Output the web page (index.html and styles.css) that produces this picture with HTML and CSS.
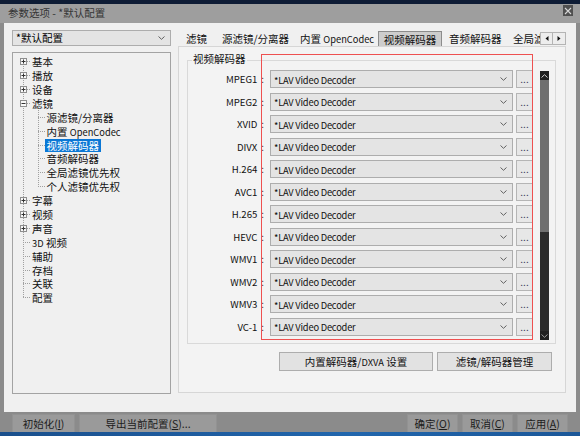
FILE: index.html
```html
<!DOCTYPE html>
<html lang="zh-CN">
<head>
<meta charset="utf-8">
<title>参数选项</title>
<link rel="stylesheet" href="styles.css">
</head>
<body>
<div class="screen">
  <div class="topstrip"></div>
  <div class="window">
    <div class="titlebar">
      <span class="title">参数选项 - *默认配置</span>
      <span class="close"><svg width="8" height="8" viewBox="0 0 8 8"><path d="M1 1L7 7M7 1L1 7" stroke="#d8d8d8" stroke-width="1.1"/></svg></span>
    </div>
    <div class="client">
      <div class="leftcol">
        <div class="combo profile">
          <span>*默认配置</span>
          <svg class="chev" width="7" height="4" viewBox="0 0 7 4"><path d="M0.5 0.5L3.5 3.3L6.5 0.5" fill="none" stroke="#606060"/></svg>
        </div>
        <div class="tree">
          <div class="level0">
            <div class="node"><svg class="exp" width="7" height="7" viewBox="0 0 7 7"><rect x="0.5" y="0.5" width="6" height="6" fill="#f7f7f7" stroke="#8e8e8e"/><path d="M1.5 3.5h4M3.5 1.5v4" stroke="#333"/></svg><span class="twig t0"></span><span class="lbl">基本</span></div>
            <div class="node"><svg class="exp" width="7" height="7" viewBox="0 0 7 7"><rect x="0.5" y="0.5" width="6" height="6" fill="#f7f7f7" stroke="#8e8e8e"/><path d="M1.5 3.5h4M3.5 1.5v4" stroke="#333"/></svg><span class="twig t0"></span><span class="lbl">播放</span></div>
            <div class="node"><svg class="exp" width="7" height="7" viewBox="0 0 7 7"><rect x="0.5" y="0.5" width="6" height="6" fill="#f7f7f7" stroke="#8e8e8e"/><path d="M1.5 3.5h4M3.5 1.5v4" stroke="#333"/></svg><span class="twig t0"></span><span class="lbl">设备</span></div>
            <div class="node"><svg class="exp" width="7" height="7" viewBox="0 0 7 7"><rect x="0.5" y="0.5" width="6" height="6" fill="#f7f7f7" stroke="#8e8e8e"/><path d="M1.5 3.5h4" stroke="#333"/></svg><span class="twig t0"></span><span class="lbl">滤镜</span></div>
            <div class="level1">
              <div class="node child"><span class="twig t1"></span><span class="lbl">源滤镜/分离器</span></div>
              <div class="node child"><span class="twig t1"></span><span class="lbl">内置 <span class="lt">OpenCodec</span></span></div>
              <div class="node child"><span class="twig t1"></span><span class="lbl sel">视频解码器</span></div>
              <div class="node child"><span class="twig t1"></span><span class="lbl">音频解码器</span></div>
              <div class="node child"><span class="twig t1"></span><span class="lbl">全局滤镜优先权</span></div>
              <div class="node child"><span class="twig t1"></span><span class="lbl">个人滤镜优先权</span></div>
            </div>
            <div class="node"><svg class="exp" width="7" height="7" viewBox="0 0 7 7"><rect x="0.5" y="0.5" width="6" height="6" fill="#f7f7f7" stroke="#8e8e8e"/><path d="M1.5 3.5h4M3.5 1.5v4" stroke="#333"/></svg><span class="twig t0"></span><span class="lbl">字幕</span></div>
            <div class="node"><svg class="exp" width="7" height="7" viewBox="0 0 7 7"><rect x="0.5" y="0.5" width="6" height="6" fill="#f7f7f7" stroke="#8e8e8e"/><path d="M1.5 3.5h4M3.5 1.5v4" stroke="#333"/></svg><span class="twig t0"></span><span class="lbl">视频</span></div>
            <div class="node"><svg class="exp" width="7" height="7" viewBox="0 0 7 7"><rect x="0.5" y="0.5" width="6" height="6" fill="#f7f7f7" stroke="#8e8e8e"/><path d="M1.5 3.5h4M3.5 1.5v4" stroke="#333"/></svg><span class="twig t0"></span><span class="lbl">声音</span></div>
            <div class="node"><span class="leafmark"></span><span class="twig t0"></span><span class="lbl"><span class="lt">3D</span> 视频</span></div>
            <div class="node"><span class="leafmark"></span><span class="twig t0"></span><span class="lbl">辅助</span></div>
            <div class="node"><span class="leafmark"></span><span class="twig t0"></span><span class="lbl">存档</span></div>
            <div class="node"><span class="leafmark"></span><span class="twig t0"></span><span class="lbl">关联</span></div>
            <div class="node"><span class="leafmark"></span><span class="twig t0"></span><span class="lbl">配置</span></div>
          </div>
        </div>
      </div>
      <div class="rightcol">
        <div class="tabstrip">
          <div class="tabs">
            <span class="tab w1">滤镜</span>
            <span class="tab w2">源滤镜/分离器</span>
            <span class="tab w3">内置 <span class="lt">OpenCodec</span></span>
            <span class="tab w4 active">视频解码器</span>
            <span class="tab w5">音频解码器</span>
            <span class="tab w6">全局滤</span>
          </div>
          <div class="tabarrows">
            <span class="arr"><svg width="4" height="5" viewBox="0 0 4 5"><path d="M3.5 0L0.5 2.5L3.5 5Z" fill="#111"/></svg></span>
            <span class="arr"><svg width="4" height="5" viewBox="0 0 4 5"><path d="M0.5 0L3.5 2.5L0.5 5Z" fill="#111"/></svg></span>
          </div>
        </div>
        <div class="tabpanel">
          <div class="group">
            <div class="legend">视频解码器</div>
            <div class="group-body">
              <div class="rows">
                <div class="row"><span class="lab">MPEG1<span class="colon">:</span></span><div class="combo dec"><span class="lt dt">*LAV Video Decoder</span><svg class="chev" width="7" height="4" viewBox="0 0 7 4"><path d="M0.5 0.5L3.5 3.3L6.5 0.5" fill="none" stroke="#606060"/></svg></div><span class="more">...</span></div>
                <div class="row"><span class="lab">MPEG2<span class="colon">:</span></span><div class="combo dec"><span class="lt dt">*LAV Video Decoder</span><svg class="chev" width="7" height="4" viewBox="0 0 7 4"><path d="M0.5 0.5L3.5 3.3L6.5 0.5" fill="none" stroke="#606060"/></svg></div><span class="more">...</span></div>
                <div class="row"><span class="lab">XVID<span class="colon">:</span></span><div class="combo dec"><span class="lt dt">*LAV Video Decoder</span><svg class="chev" width="7" height="4" viewBox="0 0 7 4"><path d="M0.5 0.5L3.5 3.3L6.5 0.5" fill="none" stroke="#606060"/></svg></div><span class="more">...</span></div>
                <div class="row"><span class="lab">DIVX<span class="colon">:</span></span><div class="combo dec"><span class="lt dt">*LAV Video Decoder</span><svg class="chev" width="7" height="4" viewBox="0 0 7 4"><path d="M0.5 0.5L3.5 3.3L6.5 0.5" fill="none" stroke="#606060"/></svg></div><span class="more">...</span></div>
                <div class="row"><span class="lab">H.264<span class="colon">:</span></span><div class="combo dec"><span class="lt dt">*LAV Video Decoder</span><svg class="chev" width="7" height="4" viewBox="0 0 7 4"><path d="M0.5 0.5L3.5 3.3L6.5 0.5" fill="none" stroke="#606060"/></svg></div><span class="more">...</span></div>
                <div class="row"><span class="lab">AVC1<span class="colon">:</span></span><div class="combo dec"><span class="lt dt">*LAV Video Decoder</span><svg class="chev" width="7" height="4" viewBox="0 0 7 4"><path d="M0.5 0.5L3.5 3.3L6.5 0.5" fill="none" stroke="#606060"/></svg></div><span class="more">...</span></div>
                <div class="row"><span class="lab">H.265<span class="colon">:</span></span><div class="combo dec"><span class="lt dt">*LAV Video Decoder</span><svg class="chev" width="7" height="4" viewBox="0 0 7 4"><path d="M0.5 0.5L3.5 3.3L6.5 0.5" fill="none" stroke="#606060"/></svg></div><span class="more">...</span></div>
                <div class="row"><span class="lab">HEVC<span class="colon">:</span></span><div class="combo dec"><span class="lt dt">*LAV Video Decoder</span><svg class="chev" width="7" height="4" viewBox="0 0 7 4"><path d="M0.5 0.5L3.5 3.3L6.5 0.5" fill="none" stroke="#606060"/></svg></div><span class="more">...</span></div>
                <div class="row"><span class="lab">WMV1<span class="colon">:</span></span><div class="combo dec"><span class="lt dt">*LAV Video Decoder</span><svg class="chev" width="7" height="4" viewBox="0 0 7 4"><path d="M0.5 0.5L3.5 3.3L6.5 0.5" fill="none" stroke="#606060"/></svg></div><span class="more">...</span></div>
                <div class="row"><span class="lab">WMV2<span class="colon">:</span></span><div class="combo dec"><span class="lt dt">*LAV Video Decoder</span><svg class="chev" width="7" height="4" viewBox="0 0 7 4"><path d="M0.5 0.5L3.5 3.3L6.5 0.5" fill="none" stroke="#606060"/></svg></div><span class="more">...</span></div>
                <div class="row"><span class="lab">WMV3<span class="colon">:</span></span><div class="combo dec"><span class="lt dt">*LAV Video Decoder</span><svg class="chev" width="7" height="4" viewBox="0 0 7 4"><path d="M0.5 0.5L3.5 3.3L6.5 0.5" fill="none" stroke="#606060"/></svg></div><span class="more">...</span></div>
                <div class="row"><span class="lab">VC-1<span class="colon">:</span></span><div class="combo dec"><span class="lt dt">*LAV Video Decoder</span><svg class="chev" width="7" height="4" viewBox="0 0 7 4"><path d="M0.5 0.5L3.5 3.3L6.5 0.5" fill="none" stroke="#606060"/></svg></div><span class="more">...</span></div>
              </div>
              <div class="vscroll">
                <span class="sb-arrow"><svg width="7" height="4" viewBox="0 0 7 4"><path d="M0.5 3.5L3.5 0.7L6.5 3.5" fill="none" stroke="#cfcfcf"/></svg></span>
                <span class="sb-thumb"></span>
                <span class="sb-track"></span>
                <span class="sb-arrow"><svg width="7" height="4" viewBox="0 0 7 4"><path d="M0.5 0.5L3.5 3.3L6.5 0.5" fill="none" stroke="#9a9a9a"/></svg></span>
              </div>
            </div>
          </div>
          <div class="panel-buttons">
            <span class="btn b1">内置解码器/<span class="lt">DXVA</span> 设置</span>
            <span class="btn b2">滤镜/解码器管理</span>
          </div>
          <div class="redbox"></div>
        </div>
      </div>
    </div>
    <div class="bottombar">
      <span class="fbtn f1">初始化(<u>I</u>)</span>
      <span class="fbtn f2">导出当前配置(<u>S</u>)...</span>
      <span class="fbtn f3">确定(<u>O</u>)</span>
      <span class="fbtn f4">取消(<u>C</u>)</span>
      <span class="fbtn f5">应用(<u>A</u>)</span>
    </div>
  </div>
  <div class="taskbar"></div>
</div>
</body>
</html>
```

FILE: styles.css
```css
* { box-sizing: border-box; }
html, body { margin: 0; padding: 0; }
body {
  width: 580px;
  height: 436px;
  overflow: hidden;
  font-family: "Noto Sans CJK SC", sans-serif;
  font-size: 10.5px;
  color: #000;
  background: #0e1c35;
}

.lt { font-size: 9.3px; line-height: 1; }
.dt { letter-spacing: -0.2px; color: #111; line-height: 14px; padding-top: 1px; }

.screen { display: flex; flex-direction: column; height: 436px; }
.topstrip { height: 4px; flex: none; background: #0e1c35; }
.taskbar { height: 4px; flex: none; background: linear-gradient(to right, #1a4f8c, #2166ad 60%, #1b5798); }

.window {
  height: 428px;
  flex: none;
  background: #8b8b8b;
  display: flex;
  flex-direction: column;
}

.titlebar {
  height: 19px;
  flex: none;
  background: #9e9e9e;
  display: flex;
  align-items: flex-start;
  padding-left: 8px;
}
.title { line-height: 18px; color: #353535; white-space: nowrap; }
.close {
  margin-left: auto;
  margin-right: 7px;
  margin-top: 1px;
  width: 10px;
  height: 11px;
  background: #505050;
  display: flex;
  align-items: center;
  justify-content: center;
}

.client {
  margin: 0 4px;
  height: 389px;
  flex: none;
  background: #f0f0f0;
  display: flex;
  gap: 7px;
  padding: 7px 0 0 8px;
}

/* left column */
.leftcol { width: 159px; display: flex; flex-direction: column; gap: 6px; }
.combo {
  height: 16px;
  border: 1px solid #adadad;
  background: #e4e4e4;
  display: flex;
  align-items: center;
  padding-left: 3px;
  white-space: nowrap;
  line-height: 14px;
}
.combo .chev { margin-left: auto; margin-right: 5px; flex: none; }
.profile { flex: none; }

.tree {
  height: 342px;
  flex: none;
  border: 1px solid #a3a3a3;
  background: #f0f0f0;
  padding-top: 1.75px;
}
.level0 {
  background-image: repeating-linear-gradient(to bottom, #a0a0a0 0 1px, transparent 1px 2px);
  background-repeat: no-repeat;
  background-size: 1px calc(100% - 13.9px);
  background-position: 10px 7px;
}
.level1 {
  background-image: repeating-linear-gradient(to bottom, #a0a0a0 0 1px, transparent 1px 2px);
  background-repeat: no-repeat;
  background-size: 1px calc(100% - 7px);
  background-position: 25px 0;
}
.node {
  height: 13.9px;
  display: flex;
  align-items: center;
  padding-left: 7px;
  white-space: nowrap;
}
.node.child { padding-left: 25px; }
.exp { flex: none; display: block; }
.leafmark {
  width: 7px;
  height: 1px;
  flex: none;
  background-image: repeating-linear-gradient(to right, #a0a0a0 0 1px, transparent 1px 2px);
  background-repeat: no-repeat;
  background-position: 3px 0;
  background-size: 4px 1px;
}
.twig {
  height: 1px;
  flex: none;
  background-image: repeating-linear-gradient(to right, #a0a0a0 0 1px, transparent 1px 2px);
}
.twig.t0 { width: 4px; }
.twig.t1 { width: 7px; }
.lbl { padding: 0 1px; line-height: 13px; color: #111; }
.child .lbl { padding: 0 1.5px; }
.lbl.sel { background: #0a77d5; color: #fff; }

/* right column */
.rightcol { width: 388px; display: flex; flex-direction: column; }
.tabstrip { height: 16px; flex: none; display: flex; position: relative; z-index: 1; }
.tabs { width: 363px; display: flex; overflow: hidden; }
.tab {
  flex: none;
  height: 16px;
  line-height: 15px;
  white-space: nowrap;
  color: #111;
  padding-top: 1px;
}
.w1 { width: 36px; padding-left: 8px; }
.w2 { width: 80px; padding-left: 8px; }
.w3 { width: 84px; padding-left: 6px; }
.w4 { width: 64px; text-align: center; }
.w5 { width: 66px; padding-left: 7px; }
.w6 { width: 33px; padding-left: 5px; }
.tab.active {
  margin-top: 1px;
  height: 16px;
  padding-top: 0;
  background: #cdcdcd;
  border: 1px solid #8c8c8c;
  border-bottom: none;
}
.tabarrows { display: flex; margin-top: 2px; height: 13px; }
.arr {
  width: 13px;
  height: 13px;
  border: 1px solid #b4b4b4;
  background: #ededed;
  display: flex;
  align-items: center;
  justify-content: center;
}
.arr + .arr { border-left: none; }

.tabpanel {
  height: 347px;
  flex: none;
  border: 1px solid #d6d6d6;
  background: #f3f3f3;
  position: relative;
}

.group {
  margin: 13px 0 0 8px;
  width: 369px;
  height: 284px;
  border: 1px solid #d9d9d9;
}
.legend {
  margin: -9px 0 0 4px;
  padding: 0 1px;
  width: fit-content;
  line-height: 14px;
  background: #f3f3f3;
  color: #111;
}
.group-body { margin-top: 4px; display: flex; align-items: flex-start; }
.rows {
  display: grid;
  grid-template-rows: repeat(12, 18px);
  row-gap: 4.5px;
}
.row { display: flex; align-items: center; }
.lab {
  width: 78px;
  text-align: right;
  white-space: nowrap;
  color: #111;
  padding-right: 2px;
  font-size: 9.6px;
}
.colon { margin-left: 4px; }
.dec { width: 243px; height: 18px; margin-left: 4px; padding-left: 3px; }
.more {
  width: 17px;
  height: 18px;
  margin-left: 3px;
  border: 1px solid #b5b5b5;
  background: #e7e7e7;
  text-align: center;
  line-height: 16px;
  font-size: 10px;
  color: #3a3a5a;
}
.vscroll {
  width: 9px;
  height: 269px;
  margin: 1px 0 0 7px;
  display: flex;
  flex-direction: column;
}
.sb-arrow {
  height: 9px;
  flex: none;
  background: #202020;
  display: flex;
  align-items: center;
  justify-content: center;
}
.sb-thumb { height: 152px; flex: none; background: #6f6f6f; }
.sb-track { flex: 1; background: #2b2b2b; }

.panel-buttons { display: flex; gap: 4px; margin: 8px 0 0 100px; }
.btn {
  height: 19px;
  border: 1px solid #adadad;
  background: #e2e2e2;
  text-align: center;
  line-height: 17px;
  white-space: nowrap;
  color: #111;
}
.b1 { width: 154px; }
.b2 { width: 115px; }

.redbox {
  position: absolute;
  left: 82px;
  top: 7px;
  width: 272px;
  height: 286px;
  border: 1px solid #ee5050;
  pointer-events: none;
}

/* bottom bar */
.bottombar {
  height: 20px;
  flex: none;
  display: flex;
  align-items: flex-end;
  padding-left: 12px;
}
.fbtn {
  height: 18px;
  background: #9a9a9a;
  border: 1px solid #929292;
  border-bottom: none;
  text-align: center;
  line-height: 17px;
  color: #1c1c1c;
  white-space: nowrap;
}
.fbtn u { text-underline-offset: 1px; }
.f1 { width: 63px; }
.f2 { width: 138px; margin-left: 4px; }
.f3 { width: 51px; margin-left: 190px; }
.f4 { width: 51px; margin-left: 4px; }
.f5 { width: 51px; margin-left: 4px; }
```
